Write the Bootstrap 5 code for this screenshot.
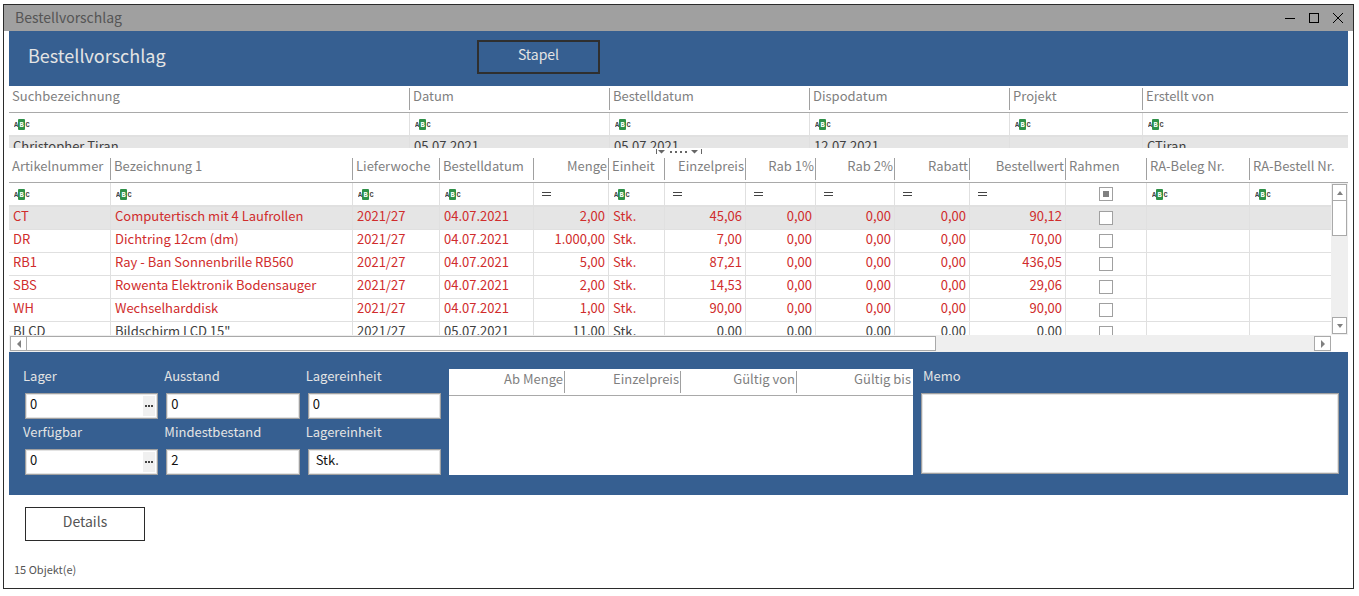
<!DOCTYPE html>
<html lang="de">
<head>
<meta charset="utf-8">
<meta name="viewport" content="width=device-width, initial-scale=1">
<title>Bestellvorschlag</title>
<link href="https://cdn.jsdelivr.net/npm/bootstrap@5.3.0/dist/css/bootstrap.min.css" rel="stylesheet">
<style>
  :root { --blue: #365f91; --line: #a9a9a9; --grid: #e0e0e0; --ink: #404040; --muted: #7f7f7f; }
  body { font-family: "Noto Sans CJK SC", "Source Sans Pro", sans-serif; font-size: 13px; line-height: 20px; color: var(--ink); background: #fff; }
  .app-window { margin: 4px 5px 7px 3px; border: 1px solid #2b2b2b; }
  .title-bar { height: 26px; background: #a0a0a0; color: #555; font-size: 14px; padding: 0 9px 2px 11px; }
  .title-bar .caption-buttons { column-gap: 12px; padding-top: 2px; }
  .title-bar button { width: 12px; height: 12px; color: #000; line-height: 0; }
  .title-bar button svg { width: 12px; height: 12px; display: block; }
  .app-body { padding: 0 5px; }
  .band { background: var(--blue); color: #e4e4e4; }
  .head-band { height: 55px; padding: 0 0 4px 19px; }
  .head-title { font-size: 18px; line-height: 24px; width: 449px; padding-bottom: 4px; }
  .btn-flat { border-radius: 0; font-size: 14px; line-height: 20px; height: 34px; }
  .btn-stapel { width: 123px; border: 2px solid #2f2f2f; color: #e4e4e4; padding: 2px 8px 8px; }
  .btn-details { width: 120px; border: 1px solid #2b2b2b; color: #555; padding: 3px 8px 9px; }

  .grid-table { table-layout: fixed; width: 100%; border-collapse: separate; border-spacing: 0; white-space: nowrap; }
  .grid-table th { height: 27px; padding: 0 3px 6px; line-height: 20px; font-weight: 400; color: var(--muted); border-bottom: 1px solid var(--line);
    background: linear-gradient(#a0a0a0, #a0a0a0) right 2px / 1px 22px no-repeat; }
  .grid-table th:last-child { background: none; }
  .grid-table th.text-end { padding-right: 2px; }
  .grid-table td { height: 23px; padding: 0 4px 4px; line-height: 18px; border-right: 1px solid var(--grid); border-bottom: 1px solid var(--grid); }
  .grid-table td.text-end { padding-right: 3px; }
  .grid-table td:last-child { border-right: 0; }
  .grid-table .filter-row td { height: 24px; padding: 0 5px; line-height: 0; border-bottom-width: 2px; vertical-align: middle; }
  .grid-table .filter-row td.op { padding-left: 8px; }
  .grid-table .chosen td { background: #e5e5e5; }
  .late td { color: #d02c2c; }
  .grid-table td.tick { padding: 0; line-height: 0; text-align: center; vertical-align: middle; }
  .abc { width: 16px; height: 11px; display: block; }
  .equals { width: 9px; height: 4px; border-top: 1px solid #444; border-bottom: 1px solid #444; }
  .tick input { appearance: none; width: 14px; height: 14px; margin: 0; border: 1px solid #a0a0a0; background: #fff; vertical-align: top; }
  .tick input:checked { background: #808080; box-shadow: inset 0 0 0 3px #fff; }
  .grid-table .filter-row td.tick { padding: 0; }

  .master-grid { height: 62px; overflow: hidden; }
  .splitter { height: 8px; }
  .splitter svg { width: 46px; height: 6px; display: block; }
  .detail-view { height: 179px; overflow: hidden; }
  .sb-btn { background: #fff; border: 1px solid var(--line); padding: 0; line-height: 0; }
  .sb-btn svg { width: 8px; height: 8px; fill: #808080; }
  .v-scroll { width: 17px; top: 27px; background: #efefef; padding: 1px; }
  .v-scroll .sb-btn { width: 15px; height: 17px; }
  .v-thumb { width: 15px; height: 36px; margin-top: -1px; background: #fff; border: 1px solid var(--line); }
  .h-scroll { height: 17px; margin-right: 17px; padding: 1px 0 1px 1px; background: #efefef; }
  .h-scroll .sb-btn { width: 17px; height: 15px; }
  .h-thumb { flex: 12; height: 15px; margin-left: -1px; background: #fff; border: 1px solid var(--line); }
  .h-rest { flex: 5; }

  .stock-band { padding: 17px 9px 20px 16px; gap: 8px; }
  .stock-fields { display: grid; grid-template-columns: repeat(3, minmax(0, 1fr)); column-gap: 8px; row-gap: 6px; width: 416px; }
  .stock-band label { display: block; line-height: 14px; height: 24px; margin-left: -2px; }
  .stock-band .memo label { margin-left: 2px; }
  .box { display: flex; width: 100%; height: 26px; background: #fff; border: 1px solid #a0a0a0; box-shadow: inset 0 0 0 1px #e3e3e3; border-radius: 0; }
  .box input { flex: 1; min-width: 0; border: 0; padding: 0 4px 4px; background: transparent; color: #111; line-height: 20px; outline-offset: -2px; }
  .box input.inset-text { padding-left: 7px; }
  .dots { width: 12px; height: 20px; margin: 2px; border: 0; padding: 0; background: #f0f0f0; line-height: 0; }
  .price-grid { width: 464px; height: 106px; background: #fff; }
  .memo textarea { height: 81px; resize: none; }
  .foot { padding: 12px 16px 11px; }
  .count { font-size: 11px; line-height: 16px; padding: 20px 0 0; margin-left: -11px; color: #555; }

  .w-a { width: 102px; } .w-b { width: 242px; } .w-c { width: 87px; } .w-d { width: 94px; } .w-e { width: 75px; }
  .w-f { width: 56px; } .w-g { width: 81px; } .w-h { width: 70px; } .w-i { width: 79px; } .w-j { width: 96px; }
  .w-k { width: 103px; } .w-name { width: 401px; } .w-date { width: 200px; } .w-proj { width: 133px; } .w-price { width: 116px; }
</style>
</head>
<body>
<svg class="d-none" aria-hidden="true">
  <symbol id="abc" viewBox="0 0 16 11">
    <rect x="4" width="7" height="11" rx="1" fill="#2f9148"/>
    <g font-family="Liberation Mono" font-weight="700" font-size="7" text-anchor="middle">
      <text x="2" y="8" fill="#444">A</text><text x="7.5" y="8" fill="#fff">B</text><text x="13.5" y="8" fill="#444">C</text>
    </g>
  </symbol>
</svg>

<main class="app-window">
  <header class="title-bar d-flex align-items-center justify-content-between">
    <span>Bestellvorschlag</span>
    <div class="caption-buttons d-flex">
      <button class="btn border-0 p-0" aria-label="Minimieren"><svg viewBox="0 0 12 12"><path d="M1 6.5h10" stroke="#000"/></svg></button>
      <button class="btn border-0 p-0" aria-label="Maximieren"><svg viewBox="0 0 12 12"><rect x="1.500" y="1.500" width="9" height="9" fill="none" stroke="#000"/></svg></button>
      <button class="btn border-0 p-0" aria-label="Schließen"><svg viewBox="0 0 12 12"><path d="M1 1l10 10M11 1L1 11" stroke="#000"/></svg></button>
    </div>
  </header>

  <div class="app-body">
    <div class="band head-band d-flex align-items-center">
      <h1 class="head-title fw-normal mb-0">Bestellvorschlag</h1>
      <button class="btn btn-flat btn-stapel">Stapel</button>
    </div>

    <div class="master-grid">
      <table class="grid-table">
        <colgroup><col class="w-name"><col class="w-date"><col class="w-date"><col class="w-date"><col class="w-proj"><col></colgroup>
        <thead>
          <tr><th>Suchbezeichnung</th><th>Datum</th><th>Bestelldatum</th><th>Dispodatum</th><th>Projekt</th><th>Erstellt von</th></tr>
        </thead>
        <tbody>
          <tr class="filter-row">
            <td><svg class="abc"><use href="#abc"/></svg></td><td><svg class="abc"><use href="#abc"/></svg></td><td><svg class="abc"><use href="#abc"/></svg></td><td><svg class="abc"><use href="#abc"/></svg></td><td><svg class="abc"><use href="#abc"/></svg></td><td><svg class="abc"><use href="#abc"/></svg></td>
          </tr>
          <tr class="chosen"><td>Christopher Tiran</td><td>05.07.2021</td><td>05.07.2021</td><td>12.07.2021</td><td></td><td>CTiran</td></tr>
        </tbody>
      </table>
    </div>

    <div class="splitter d-flex justify-content-center">
      <svg viewBox="0 0 46 6" fill="#666"><path d="M0 1h1v5H0zM45 1h1v5h-1zM2 2h7l-3.500 3.500zM35 2h7l-3.500 3.500zM14 3h2v2h-2zM19 3h2v2h-2zM24 3h2v2h-2zM29 3h2v2h-2z"/></svg>
    </div>

    <div class="detail-view position-relative">
      <table class="grid-table">
        <colgroup><col class="w-a"><col class="w-b"><col class="w-c"><col class="w-d"><col class="w-e"><col class="w-f"><col class="w-g"><col class="w-h"><col class="w-i"><col class="w-e"><col class="w-j"><col class="w-g"><col class="w-k"><col></colgroup>
        <thead>
          <tr><th>Artikelnummer</th><th>Bezeichnung 1</th><th>Lieferwoche</th><th>Bestelldatum</th><th class="text-end">Menge</th><th>Einheit</th><th class="text-end">Einzelpreis</th><th class="text-end">Rab 1%</th><th class="text-end">Rab 2%</th><th class="text-end">Rabatt</th><th class="text-end">Bestellwert</th><th>Rahmen</th><th>RA-Beleg Nr.</th><th>RA-Bestell Nr.</th></tr>
        </thead>
        <tbody>
          <tr class="filter-row">
            <td><svg class="abc"><use href="#abc"/></svg></td><td><svg class="abc"><use href="#abc"/></svg></td><td><svg class="abc"><use href="#abc"/></svg></td><td><svg class="abc"><use href="#abc"/></svg></td>
            <td class="op"><div class="equals"></div></td><td><svg class="abc"><use href="#abc"/></svg></td>
            <td class="op"><div class="equals"></div></td><td class="op"><div class="equals"></div></td><td class="op"><div class="equals"></div></td><td class="op"><div class="equals"></div></td><td class="op"><div class="equals"></div></td>
            <td class="tick"><input type="checkbox" checked aria-label="Filter Rahmen"></td>
            <td><svg class="abc"><use href="#abc"/></svg></td><td><svg class="abc"><use href="#abc"/></svg></td>
          </tr>
          <tr class="late chosen"><td>CT</td><td>Computertisch mit 4 Laufrollen</td><td>2021/27</td><td>04.07.2021</td><td class="text-end">2,00</td><td>Stk.</td><td class="text-end">45,06</td><td class="text-end">0,00</td><td class="text-end">0,00</td><td class="text-end">0,00</td><td class="text-end">90,12</td><td class="tick"><input type="checkbox" aria-label="Rahmen CT"></td><td></td><td></td></tr>
          <tr class="late"><td>DR</td><td>Dichtring 12cm (dm)</td><td>2021/27</td><td>04.07.2021</td><td class="text-end">1.000,00</td><td>Stk.</td><td class="text-end">7,00</td><td class="text-end">0,00</td><td class="text-end">0,00</td><td class="text-end">0,00</td><td class="text-end">70,00</td><td class="tick"><input type="checkbox" aria-label="Rahmen DR"></td><td></td><td></td></tr>
          <tr class="late"><td>RB1</td><td>Ray - Ban Sonnenbrille RB560</td><td>2021/27</td><td>04.07.2021</td><td class="text-end">5,00</td><td>Stk.</td><td class="text-end">87,21</td><td class="text-end">0,00</td><td class="text-end">0,00</td><td class="text-end">0,00</td><td class="text-end">436,05</td><td class="tick"><input type="checkbox" aria-label="Rahmen RB1"></td><td></td><td></td></tr>
          <tr class="late"><td>SBS</td><td>Rowenta Elektronik Bodensauger</td><td>2021/27</td><td>04.07.2021</td><td class="text-end">2,00</td><td>Stk.</td><td class="text-end">14,53</td><td class="text-end">0,00</td><td class="text-end">0,00</td><td class="text-end">0,00</td><td class="text-end">29,06</td><td class="tick"><input type="checkbox" aria-label="Rahmen SBS"></td><td></td><td></td></tr>
          <tr class="late"><td>WH</td><td>Wechselharddisk</td><td>2021/27</td><td>04.07.2021</td><td class="text-end">1,00</td><td>Stk.</td><td class="text-end">90,00</td><td class="text-end">0,00</td><td class="text-end">0,00</td><td class="text-end">0,00</td><td class="text-end">90,00</td><td class="tick"><input type="checkbox" aria-label="Rahmen WH"></td><td></td><td></td></tr>
          <tr><td>BLCD</td><td>Bildschirm LCD 15"</td><td>2021/27</td><td>05.07.2021</td><td class="text-end">11,00</td><td>Stk.</td><td class="text-end">0,00</td><td class="text-end">0,00</td><td class="text-end">0,00</td><td class="text-end">0,00</td><td class="text-end">0,00</td><td class="tick"><input type="checkbox" aria-label="Rahmen BLCD"></td><td></td><td></td></tr>
        </tbody>
      </table>
      <div class="v-scroll position-absolute end-0 bottom-0 d-flex flex-column">
        <button class="sb-btn" aria-label="Nach oben"><svg viewBox="0 0 8 8"><path d="M1 6h6L4 2z"/></svg></button>
        <div class="v-thumb"></div>
        <button class="sb-btn mt-auto" aria-label="Nach unten"><svg viewBox="0 0 8 8"><path d="M1 2h6L4 6z"/></svg></button>
      </div>
    </div>
    <div class="h-scroll d-flex">
      <button class="sb-btn flex-shrink-0" aria-label="Nach links"><svg viewBox="0 0 8 8"><path d="M6 0v8L2 4z"/></svg></button>
      <div class="h-thumb"></div><div class="h-rest"></div>
      <button class="sb-btn flex-shrink-0" aria-label="Nach rechts"><svg viewBox="0 0 8 8"><path d="M2 0v8L6 4z"/></svg></button>
    </div>

    <section class="band stock-band d-flex">
      <div class="stock-fields flex-shrink-0">
        <div><label for="lager">Lager</label><div class="box"><input id="lager" type="text" value="0"><button class="dots" aria-label="Lager auswählen"><svg width="9" height="3" fill="#444"><path d="M0 0h2v2H0zM3 0h2v2H3zM6 0h2v2H6z"/></svg></button></div></div>
        <div><label for="ausstand">Ausstand</label><div class="box"><input id="ausstand" type="text" value="0"></div></div>
        <div><label for="einheit1">Lagereinheit</label><div class="box"><input id="einheit1" type="text" value="0"></div></div>
        <div><label for="verf">Verfügbar</label><div class="box"><input id="verf" type="text" value="0"><button class="dots" aria-label="Verfügbar auswählen"><svg width="9" height="3" fill="#444"><path d="M0 0h2v2H0zM3 0h2v2H3zM6 0h2v2H6z"/></svg></button></div></div>
        <div><label for="mindest">Mindestbestand</label><div class="box"><input id="mindest" type="text" value="2"></div></div>
        <div><label for="einheit2">Lagereinheit</label><div class="box"><input id="einheit2" class="inset-text" type="text" value="Stk."></div></div>
      </div>
      <div class="price-grid flex-shrink-0">
        <table class="grid-table">
          <colgroup><col class="w-price"><col class="w-price"><col class="w-price"><col></colgroup>
          <thead><tr><th class="text-end">Ab Menge</th><th class="text-end">Einzelpreis</th><th class="text-end">Gültig von</th><th class="text-end">Gültig bis</th></tr></thead>
        </table>
      </div>
      <div class="memo flex-grow-1"><label for="memo">Memo</label><textarea id="memo" class="box"></textarea></div>
    </section>

    <footer class="foot">
      <button class="btn btn-flat btn-details">Details</button>
      <p class="count mb-0">15 Objekt(e)</p>
    </footer>
  </div>
</main>
<script src="https://cdn.jsdelivr.net/npm/bootstrap@5.3.0/dist/js/bootstrap.bundle.min.js"></script>
</body>
</html>
